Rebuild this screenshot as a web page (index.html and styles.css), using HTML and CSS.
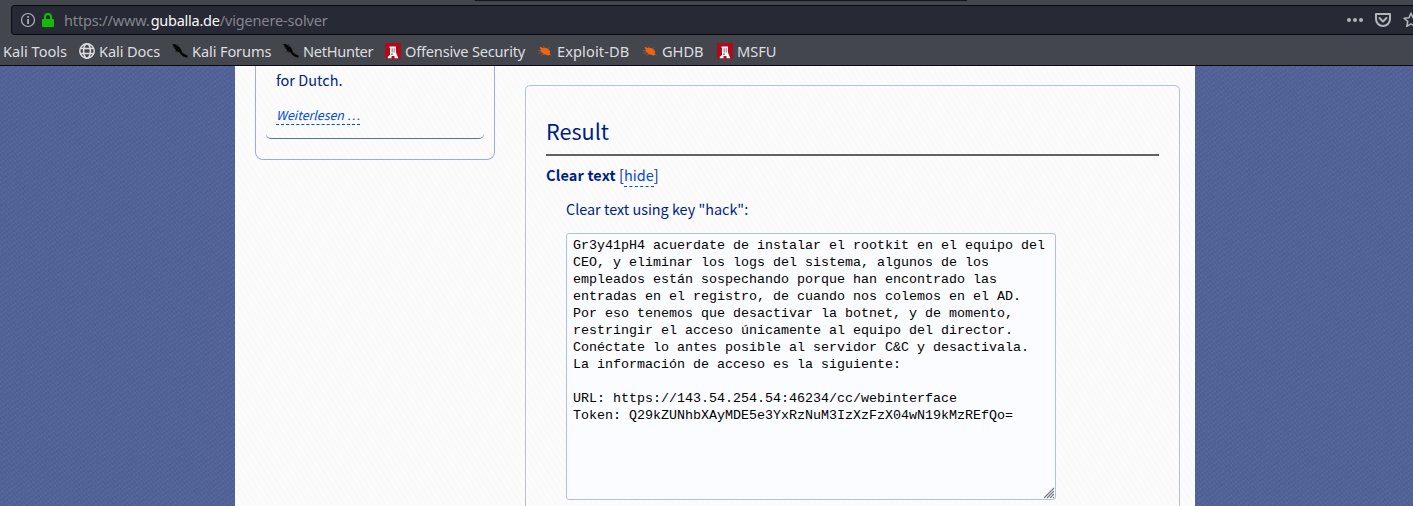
FILE: index.html
```html
<!DOCTYPE html>
<html lang="de">
<head>
<meta charset="utf-8">
<title>Vigenère Solver</title>
<link rel="stylesheet" href="styles.css">
</head>
<body>
<svg class="defs" aria-hidden="true">
  <symbol id="dragon" viewBox="0 0 16 16"><path fill="#050505" d="M.3 1l3 .3L5.500 3 8 4.500l1.200 2.500.8 2.300 2.500 2 3.300 1.400-.6 2-3.700-1.200-2.300-1.700-1.700-2.300L4.500 8 3 6 1.500 3.500z"/><path d="M1 4l2.500 1M3 8.500l3 .5M5 1l2 2.500" stroke="#24262b" stroke-width=".9"/></symbol>
  <symbol id="offsec" viewBox="0 0 16 16"><path fill="#b00b1c" d="M0 0h16v16H0z"/><path fill="#fff" d="M4.500 3.500H11V9.500l2.300 5.800H9.500v-2.200h-3v2.200H2.800v-1.500L5 12V5h-.5z"/><path fill="#a51c2c" d="M6.700 5.300h.8v4.200h-.8zM8.800 5.300h.7v4.200h-.7zM6.200 10.500h1.500v1.200H6.200z"/></symbol>
  <symbol id="bug" viewBox="0 0 16 16"><path fill="#ef6413" d="M2.500 4.500l1.500-.5 1.200 1L7 4.500l3 .7 2 1.800 1.300 1.500-.5 1.700.5 1.600-2 .7-2.300-.7-2.500-.8L4.500 9 3.300 7.500l.5-1z"/><path d="M7 4.500L6 3M4 8L1 7.500M7.500 11l-3 1M10.500 5.500l2-1M4.500 9.500l-3 .8M13 11l1.500 1.500" stroke="#a95a30" stroke-width=".8" fill="none"/></symbol>
</svg>
<header class="chrome">
  <div class="tab-edge"></div>
  <div class="urlbar">
    <svg class="info" viewBox="0 0 16 16"><circle cx="8" cy="8" r="6.500" fill="none" stroke="#b4b5b9" stroke-width="1.200"/><path fill="#b4b5b9" d="M7.200 4h1.700v1.700H7.200zM7.200 7h1.700v5H7.200z"/></svg>
    <svg class="lock" viewBox="0 0 12 14"><path d="M3 6V3.900a3 3 0 0 1 6 0V6" fill="none" stroke="#12bc00" stroke-width="2"/><rect y="6" width="12" height="8" rx="1" fill="#12bc00"/></svg>
    <div class="url"><span>https://www.</span><b>guballa.de</b><span>/vigenere-solver</span></div>
    <svg class="dots" viewBox="0 0 16 4"><g fill="#b4b5b9"><circle cx="2" cy="2" r="2"/><circle cx="8" cy="2" r="2"/><circle cx="14" cy="2" r="2"/></g></svg>
    <svg class="pocket" viewBox="0 0 16 14"><path d="M1 1h14v5a7 7 0 0 1-14 0z" fill="none" stroke="#b4b5b9" stroke-width="2" stroke-linejoin="round"/><path d="M4.500 5L8 8.500 11.500 5" fill="none" stroke="#b4b5b9" stroke-width="2" stroke-linecap="round" stroke-linejoin="round"/></svg>
    <svg class="star" viewBox="0 0 16 16"><path d="M8 1.200l2 4.500 4.900.5-3.700 3.300 1.100 4.900L8 11.900l-4.300 2.500 1.100-4.900L1.100 6.200 6 5.700z" fill="none" stroke="#b4b5b9" stroke-width="1.600" stroke-linejoin="round"/></svg>
  </div>
  <nav class="bookmarks">
    <a class="mark tools"><span>Kali Tools</span></a>
    <a class="mark docs"><svg viewBox="0 0 16 16"><g fill="none" stroke="#dedede" stroke-width="1.500"><circle cx="8" cy="8" r="7.200"/><ellipse cx="8" cy="8" rx="3.400" ry="7.200"/><path d="M1.500 5.500h13M1.500 10.500h13"/></g></svg><span>Kali Docs</span></a>
    <a class="mark forums"><svg><use href="#dragon"/></svg><span>Kali Forums</span></a>
    <a class="mark hunter"><svg><use href="#dragon"/></svg><span>NetHunter</span></a>
    <a class="mark offsec"><svg><use href="#offsec"/></svg><span>Offensive Security</span></a>
    <a class="mark exploit"><svg><use href="#bug"/></svg><span>Exploit-DB</span></a>
    <a class="mark ghdb"><svg><use href="#bug"/></svg><span>GHDB</span></a>
    <a class="mark msfu"><svg><use href="#offsec"/></svg><span>MSFU</span></a>
  </nav>
</header>
<div class="page">
  <main class="wrapper">
    <aside class="sidebar">
      <div class="news">
        <p class="news-text">for Dutch.</p>
        <a class="more">Weiterlesen …</a>
      </div>
    </aside>
    <section class="result">
      <h2>Result</h2>
      <p class="toggle"><strong>Clear text</strong> [<a>hide</a>]</p>
      <p class="caption">Clear text using key "hack":</p>
      <div class="output">Gr3y41pH4 acuerdate de instalar el rootkit en el equipo del
CEO, y eliminar los logs del sistema, algunos de los
empleados están sospechando porque han encontrado las
entradas en el registro, de cuando nos colemos en el AD.
Por eso tenemos que desactivar la botnet, y de momento,
restringir el acceso únicamente al equipo del director.
Conéctate lo antes posible al servidor C&amp;C y desactivala.
La información de acceso es la siguiente:

URL: https://143.54.254.54:46234/cc/webinterface
Token: Q29kZUNhbXAyMDE5e3YxRzNuM3IzXzFzX04wN19kMzREfQo=<svg class="grip" viewBox="0 0 12 12"><path d="M1 11L11 1M4 11l7-7M7 11l4-4M10 11l1-1" stroke="#777" stroke-width="1.100"/></svg></div>
    </section>
  </main>
</div>
</body>
</html>
```
FILE: styles.css
```css
* { box-sizing: border-box; }
body {
  margin: 0;
  height: 506px;
  overflow: hidden;
  display: flex;
  flex-direction: column;
  font-family: "Noto Sans CJK SC", "Noto Sans", sans-serif;
}
p, h2 { margin: 0; font-weight: 400; }
.defs { position: absolute; width: 0; height: 0; }

.chrome {
  position: relative;
  flex: none;
  height: 66px;
  padding-top: 5px;
  background: #43464d;
  border-bottom: 1px solid #0b0b0f;
  font-family: "Noto Sans", sans-serif;
}
.tab-edge {
  position: absolute;
  top: 0;
  left: 475px;
  width: 492px;
  height: 1px;
  background: #17171b;
  box-shadow: 0 0 1px #17171b;
}
.urlbar {
  display: flex;
  align-items: center;
  height: 30px;
  margin-left: 11px;
  padding-left: 8px;
  background: #272935;
  border: 1px solid #0b0b0f;
  border-right: 0;
  border-radius: 4px 0 0 4px;
}
.urlbar svg { flex: none; }
.info { width: 16px; height: 16px; }
.lock { width: 12px; height: 14px; margin-left: 6px; }
.url { flex: 1; margin-left: 10px; font-size: 14.5px; letter-spacing: -.15px; line-height: 28px; color: #85868e; white-space: pre; }
.url b { font-weight: 400; letter-spacing: -.25px; margin-left: 1px; color: #f9f9fa; }
.dots { width: 16px; height: 4px; }
.pocket { width: 16px; height: 14px; margin-left: 12px; }
.star { width: 16px; height: 16px; margin: 0 -6px 0 12px; }

.bookmarks { display: flex; height: 30px; padding: 1px 0 0 3px; }
.mark {
  display: flex;
  flex: none;
  align-items: center;
  gap: 4px;
  color: #dedee0;
  font-size: 14.6px;
  line-height: 30px;
  white-space: nowrap;
}
.mark svg { width: 16px; height: 16px; flex: none; }
.tools { width: 76px; }
.docs { width: 93px; letter-spacing: -.1px; }
.forums { width: 111px; letter-spacing: -.12px; }
.hunter { width: 102px; letter-spacing: -.3px; }
.offsec { width: 152px; letter-spacing: -.2px; }
.exploit { width: 105px; letter-spacing: .1px; }
.ghdb { width: 75px; }

.page {
  flex: 1;
  min-height: 0;
  display: flex;
  justify-content: center;
  padding-left: 17px;
  background:
    repeating-linear-gradient(52deg, #263f8020 0 1px, transparent 1px 3px),
    repeating-linear-gradient(142deg, #8ba0cc18 0 1px, transparent 1px 4px),
    #526397;
}
.wrapper {
  display: flex;
  align-items: flex-start;
  gap: 30px;
  width: 960px;
  padding: 0 15px 0 20px;
  background: repeating-linear-gradient(58deg, #ffffff70 0 2px, transparent 2px 5px), #fafafa;
  color: #001e82;
}
.sidebar {
  width: 240px;
  height: 94px;
  padding: 0 10px;
  border: 1px solid #9dabe0;
  border-top: 0;
  border-radius: 0 0 8px 8px;
}
.news {
  height: 73px;
  padding: 0 10px;
  border-bottom: 1px solid #5b6eae;
  border-radius: 0 0 5px 5px;
}
.news-text { font-size: 14.5px; line-height: 28px; }
.more {
  display: block;
  width: 84px;
  margin-top: 12px;
  height: 19px;
  font-size: 12.4px;
  line-height: 18px;
  font-style: italic;
  white-space: nowrap;
  color: #004bd8;
  border-bottom: 1px dashed #004bd8;
}
.result {
  width: 655px;
  height: 440px;
  margin-top: 19px;
  padding: 0 20px;
  border: 1px solid #b0bfeb;
  border-radius: 5px;
}
.result h2 {
  height: 70px;
  padding-top: 27px;
  font-size: 21.6px;
  line-height: 36px;
  border-bottom: 2px solid #626262;
}
.toggle { height: 34px; padding-top: 4px; font-size: 14.5px; line-height: 30px; }
.toggle strong { font-weight: 700; letter-spacing: .15px; }
.toggle a { display: inline-block; height: 27px; color: #004bd8; border-bottom: 1px dashed #004bd8; }
.caption { margin: 5px 0 10px 20px; font-size: 14.4px; line-height: 28px; }
.output {
  position: relative;
  width: 490px;
  height: 267px;
  margin-left: 20px;
  padding: 3px 6px;
  background: #fbfcff;
  border: 1px solid #afc0ec;
  border-radius: 3px;
  color: #000;
  font: 13.333px/17px "Liberation Mono", monospace;
  white-space: pre;
}
.grip { position: absolute; right: 0; bottom: 0; width: 12px; height: 12px; }
```
